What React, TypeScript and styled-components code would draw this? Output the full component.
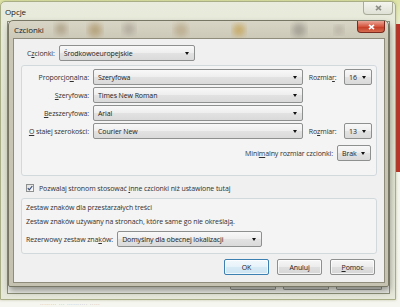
import styled, { createGlobalStyle } from "styled-components";

const GlobalStyle = createGlobalStyle`
  html, body {
    margin: 0;
    padding: 0;
    background: #f4f4ee;
    overflow: hidden;
  }
`;

const Desktop = styled.div`
  position: relative;
  width: 400px;
  height: 307px;
  overflow: hidden;
  font-family: "Open Sans", "Noto Sans", sans-serif;
  font-size: 7px;
  letter-spacing: -0.1px;
  color: #303030;
  background:
    linear-gradient(90deg, transparent 393px, #b8332a 393px) 0 24px / 100% 148px no-repeat,
    linear-gradient(#dfe5a8, #f3f3ea 40px, #f6f6f1);
`;

const BottomText = styled.div`
  position: absolute;
  left: 40px;
  top: 300px;
  color: #a8a8a0;
  font-size: 6px;
  letter-spacing: 0.5px;
`;

const OuterWindow = styled.div`
  position: absolute;
  left: 0;
  top: 1px;
  width: 394px;
  height: 297px;
  display: flex;
  flex-direction: column;
  border: 1px solid #a9ae86;
  border-radius: 5px 5px 0 0;
  background: linear-gradient(#e9ecdc, #dfe3cf 40%, #e6e8da);
  box-shadow: 0 0 3px rgba(120, 130, 60, 0.4);
`;

const OuterTitleBar = styled.div`
  height: 19px;
  display: flex;
  align-items: flex-start;
  justify-content: space-between;
  padding-left: 4px;
  font-size: 8px;
  color: #1a1a1a;
`;

const OuterTitle = styled.span`
  margin-top: 4px;
`;

const CloseButton = styled.div<{ $red?: boolean }>`
  box-sizing: border-box;
  flex: none;
  width: ${(p) => (p.$red ? 28 : 30)}px;
  height: ${(p) => (p.$red ? 12 : 13)}px;
  border: 1px solid ${(p) => (p.$red ? "#7a2a1e" : "#a8ac98")};
  border-top: none;
  border-radius: 0 0 4px 4px;
  background: ${(p) =>
    p.$red
      ? "linear-gradient(#eaa596, #d5563f 50%, #c33a22 51%, #d66b4f)"
      : "linear-gradient(#f4f5ee, #dfe1d6)"};
  display: flex;
  align-items: center;
  justify-content: center;
`;

const OuterClient = styled.div`
  flex: 1;
  margin: 0 5px 5px 6px;
  border: 1px solid #8d9078;
  background: #f1f1ec;
  display: flex;
  flex-direction: column;
  justify-content: flex-end;
`;

const HiddenButtons = styled.div`
  display: flex;
  justify-content: flex-end;
  gap: 7px;
  padding: 0 7px 3px 0;
`;

const HiddenButton = styled.div`
  width: 44px;
  height: 10px;
  border: 1px solid #8a8a86;
  border-top: none;
  border-radius: 0 0 2px 2px;
  background: #d6d6d2;
`;

const Dialog = styled.div`
  position: absolute;
  left: 8px;
  top: 20px;
  width: 379px;
  height: 265px;
  display: flex;
  flex-direction: column;
  border: 1px solid #777563;
  border-radius: 5px 5px 2px 2px;
  background: linear-gradient(#d9d5c6, #cbc7b6 20px, #c6c2b2);
  box-shadow: 1px 4px 6px rgba(40, 40, 30, 0.45);
`;

const DialogTitleBar = styled.div`
  position: relative;
  height: 17px;
  display: flex;
  align-items: flex-start;
  justify-content: space-between;
  padding: 0 3px 0 5px;
  font-size: 8px;
  color: #1a1a1a;
`;

const TitleText = styled.span`
  position: relative;
  margin-top: 3px;
`;

const Blur = styled.svg`
  position: absolute;
  left: 0;
  top: 0;
`;

const Client = styled.div`
  flex: 1;
  margin: 0 3px 3px 4px;
  border: 1px solid #8f8c7c;
  background: #f0f0f0;
  padding: 6px 6px 0 6px;
  display: flex;
  flex-direction: column;
`;

const TopRow = styled.div`
  display: flex;
  align-items: center;
  gap: 4px;
  padding-left: 7px;
  height: 16px;
`;

const Label = styled.span<{ $align?: string }>`
  white-space: nowrap;
  text-align: ${(p) => p.$align || "left"};
`;

const Select = styled.div<{ $w?: number }>`
  box-sizing: border-box;
  width: ${(p) => (p.$w ? `${p.$w}px` : "auto")};
  height: 16px;
  display: flex;
  align-items: center;
  justify-content: space-between;
  gap: 3px;
  padding: 0 5px 0 4px;
  border: 1px solid #8e8f8f;
  border-radius: 2px;
  background: linear-gradient(#f8f8f8, #eeeeee 50%, #e2e2e2 51%, #dadada);
  color: #222;
  white-space: nowrap;
  &::after {
    content: "";
    flex: none;
    border-left: 2.5px solid transparent;
    border-right: 2.5px solid transparent;
    border-top: 3px solid #111;
  }
`;

const Group = styled.div`
  border: 1px solid #d2d9dd;
  border-radius: 3px;
  background: #f4f4f4;
`;

const FontGroup = styled(Group)`
  margin: 4px 1px 0 1px;
  padding: 3px 4px 14px 0;
`;

const FontGrid = styled.div`
  display: grid;
  grid-template-columns: 67px 210px 33px 28px;
  grid-auto-rows: 16px;
  column-gap: 4px;
  row-gap: 2px;
  align-items: center;
`;

const MinRow = styled.div`
  display: flex;
  justify-content: flex-end;
  align-items: center;
  gap: 4px;
  margin-top: 6px;
  padding-right: 1px;
  height: 16px;
`;

const CheckRow = styled.label`
  display: flex;
  align-items: center;
  gap: 5px;
  margin: 7px 0 0 6px;
  height: 10px;
`;

const CheckBox = styled.span`
  box-sizing: border-box;
  width: 8px;
  height: 8px;
  border: 1px solid #8e8f8f;
  background: linear-gradient(135deg, #dedede, #fbfbfb);
  display: flex;
  align-items: center;
  justify-content: center;
`;

const CharsetGroup = styled(Group)`
  margin: 5px 1px 0 1px;
  padding: 4px 4px 6px 4px;
  display: flex;
  flex-direction: column;
  gap: 4px;
`;

const Line = styled.div`
  height: 10px;
  line-height: 10px;
  white-space: nowrap;
`;

const CharsetRow = styled.div`
  display: flex;
  align-items: center;
  gap: 4px;
  height: 16px;
`;

const ButtonRow = styled.div`
  display: flex;
  justify-content: flex-end;
  gap: 8px;
  margin-top: 5px;
  padding-right: 3px;
`;

const Button = styled.div<{ $default?: boolean }>`
  box-sizing: border-box;
  width: 45px;
  height: 16px;
  display: flex;
  align-items: center;
  justify-content: center;
  border: 1px solid ${(p) => (p.$default ? "#3c7fb1" : "#8e8f8f")};
  border-radius: 2px;
  background: ${(p) =>
    p.$default
      ? "linear-gradient(#f2f9fd, #e6f2f9 50%, #d6eaf5 51%, #cde4f1)"
      : "linear-gradient(#f6f6f6, #ececec 50%, #dfdfdf 51%, #d6d6d6)"};
  box-shadow: inset 0 0 0 1px rgba(255, 255, 255, 0.7);
  color: #222;
`;

const U = styled.span`
  text-decoration: underline;
`;

const blurSpots = [
  { x: 52, y: 8, r: 6, c: "#a89a7e" },
  { x: 86, y: 9, r: 7, c: "#b09a70" },
  { x: 120, y: 8, r: 6, c: "#a8a294" },
  { x: 172, y: 9, r: 7, c: "#b8a888" },
  { x: 230, y: 9, r: 6, c: "#c4a050" },
  { x: 290, y: 9, r: 7, c: "#9a978c" },
  { x: 330, y: 9, r: 5, c: "#b0ab9c" },
];

const CloseX = ({ color }: { color: string }) => (
  <svg width="7" height="6" viewBox="0 0 7 6">
    <path d="M1 0.8 L6 5.2 M6 0.8 L1 5.2" stroke={color} strokeWidth="1.6" fill="none" />
  </svg>
);

export default function App() {
  return (
    <Desktop>
      <GlobalStyle />
      <BottomText>········ ··· ·········· ·····</BottomText>
      <OuterWindow>
        <OuterTitleBar>
          <OuterTitle>Opcje</OuterTitle>
          <CloseButton style={{ marginRight: 2 }}>
            <CloseX color="#8d8f86" />
          </CloseButton>
        </OuterTitleBar>
        <OuterClient>
          <HiddenButtons>
            <HiddenButton />
            <HiddenButton />
            <HiddenButton />
          </HiddenButtons>
        </OuterClient>
      </OuterWindow>

      <Dialog>
        <DialogTitleBar>
          <Blur width="379" height="17">
            <defs>
              <filter id="glass">
                <feGaussianBlur stdDeviation="3" />
              </filter>
            </defs>
            {blurSpots.map((s, i) => (
              <circle key={i} cx={s.x} cy={s.y} r={s.r} fill={s.c} opacity="0.8" filter="url(#glass)" />
            ))}
          </Blur>
          <TitleText>Czcionki</TitleText>
          <CloseButton $red>
            <CloseX color="#ffffff" />
          </CloseButton>
        </DialogTitleBar>
        <Client>
          <TopRow>
            <Label>
              C<U>z</U>cionki:
            </Label>
            <Select $w={136}>Środkowoeuropejskie</Select>
          </TopRow>

          <FontGroup>
            <FontGrid>
              <Label $align="right">
                Proporcjo<U>n</U>alna:
              </Label>
              <Select>Szeryfowa</Select>
              <Label>
                &nbsp;Rozmia<U>r</U>:
              </Label>
              <Select>16</Select>

              <Label $align="right">
                <U>S</U>zeryfowa:
              </Label>
              <Select>Times New Roman</Select>
              <span />
              <span />

              <Label $align="right">
                <U>B</U>ezszeryfowa:
              </Label>
              <Select>Arial</Select>
              <span />
              <span />

              <Label $align="right">
                <U>O</U> stałej szerokości:
              </Label>
              <Select>Courier New</Select>
              <Label>
                &nbsp;Ro<U>z</U>miar:
              </Label>
              <Select>13</Select>
            </FontGrid>
            <MinRow>
              <Label>
                Mini<U>m</U>alny rozmiar czcionki:
              </Label>
              <Select $w={34}>Brak</Select>
            </MinRow>
          </FontGroup>

          <CheckRow>
            <CheckBox>
              <svg width="6" height="6" viewBox="0 0 6 6">
                <path d="M0.8 3.2 L2.3 4.8 L5.3 1" stroke="#3b4f7a" strokeWidth="1.2" fill="none" />
              </svg>
            </CheckBox>
            <span>
              Pozwalaj stronom stosować <U>i</U>nne czcionki niż ustawione tutaj
            </span>
          </CheckRow>

          <CharsetGroup>
            <Line>Zestaw znaków dla przestarzałych treści</Line>
            <Line>Zestaw znaków używany na stronach, które same go nie określają.</Line>
            <CharsetRow>
              <Label>
                Rezerwowy zestaw zna<U>k</U>ów:
              </Label>
              <Select $w={145}>Domyślny dla obecnej lokalizacji</Select>
            </CharsetRow>
          </CharsetGroup>

          <ButtonRow>
            <Button $default>OK</Button>
            <Button>Anuluj</Button>
            <Button>
              <U>P</U>omoc
            </Button>
          </ButtonRow>
        </Client>
      </Dialog>
    </Desktop>
  );
}
